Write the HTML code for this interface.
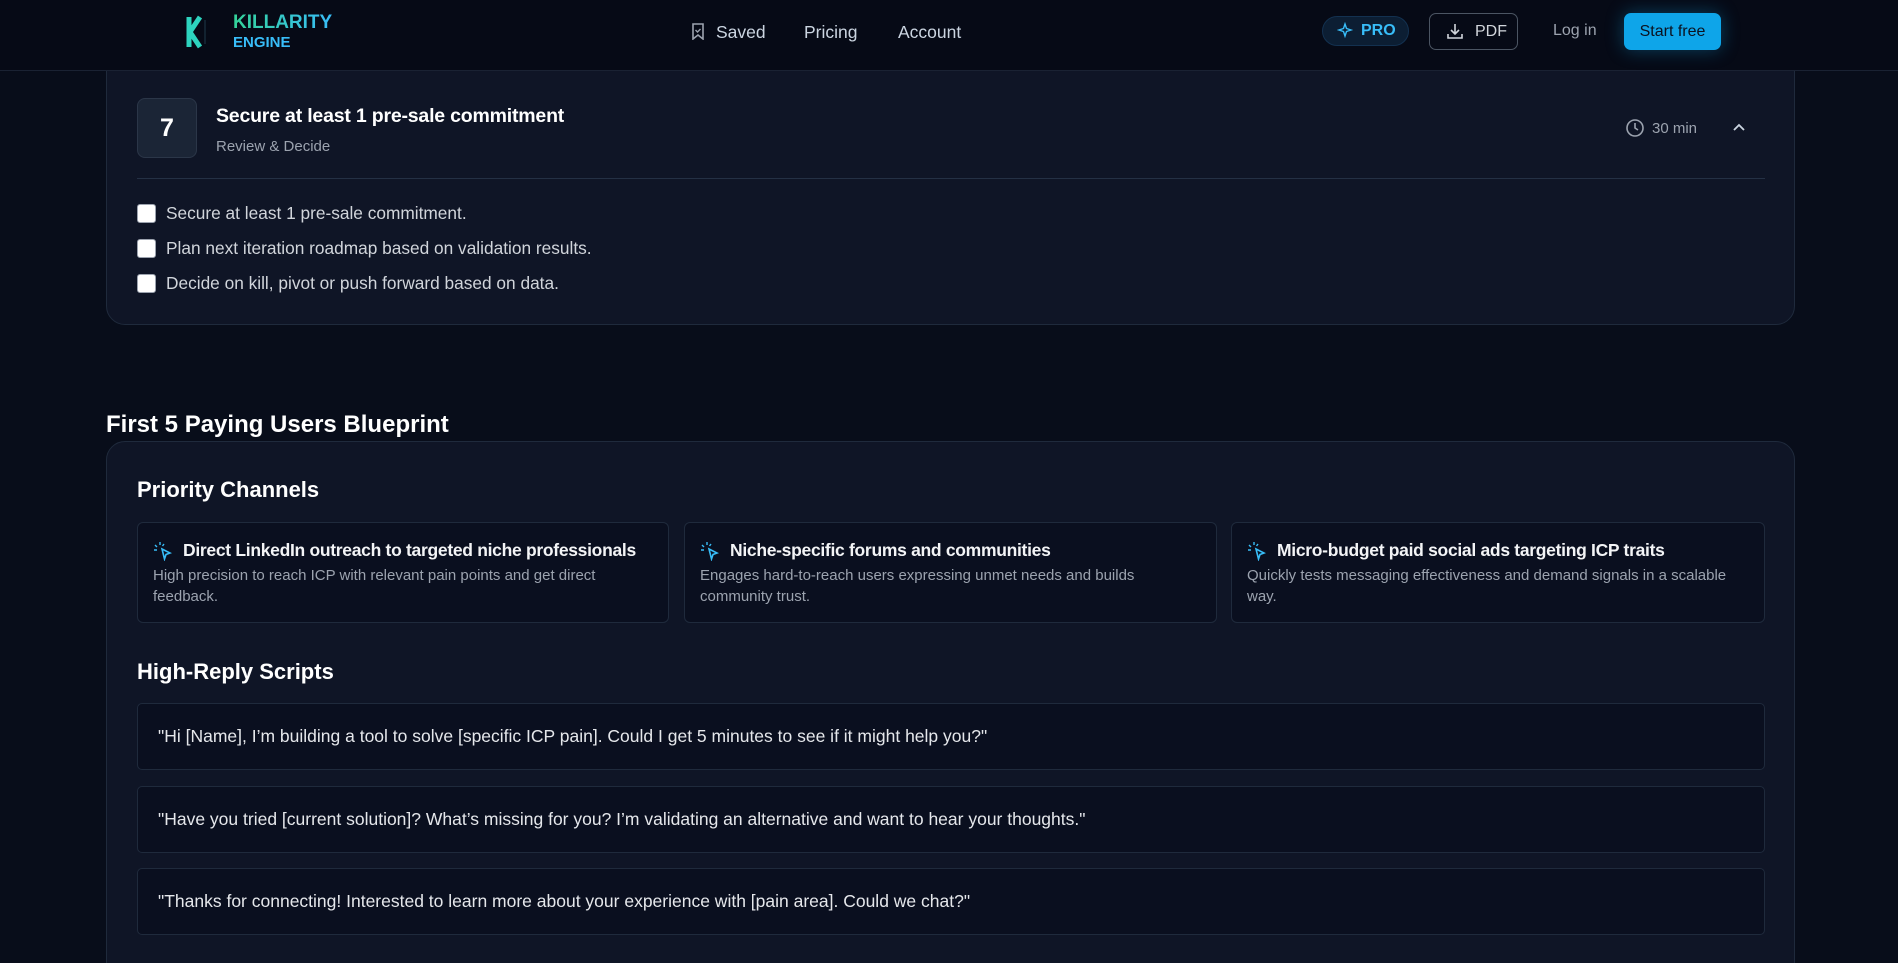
<!DOCTYPE html>
<html style="width:1898px;height:963px;overflow:hidden"><head><meta charset="utf-8"><style>
*{box-sizing:border-box;margin:0;padding:0}
body{width:1898px;height:963px;overflow:hidden;background:#080d1a;font-family:"Liberation Sans",sans-serif;color:#e5e7eb;position:relative}
.abs{position:absolute}
nav{position:absolute;left:0;top:0;width:1898px;height:71px;background:#060a16;border-bottom:1px solid #1a2233;z-index:5}
.card{position:absolute;left:106px;width:1689px;background:#0f1526;border:1px solid #1f2a3c;border-radius:19px}
.cb{position:absolute;left:137px;width:19px;height:19px;background:#fff;border-radius:3px;border:1px solid #9ca3af}
.ck{position:absolute;left:166px;font-size:17.3px;color:#d1d5db}
.ch{position:absolute;top:522px;height:101px;background:#0a0f1f;border:1px solid #1f2a3c;border-radius:6px;padding:0 15px}
.ch h4{font-size:17.5px;letter-spacing:-0.3px;font-weight:bold;color:#f3f4f6;margin-top:17px;display:flex;align-items:center;gap:10px;white-space:nowrap}
.ch p{font-size:15px;color:#9ca3af;line-height:20.5px;margin-top:5px}
.sc{position:absolute;left:137px;width:1628px;height:67px;background:#0a0f1f;border:1px solid #1f2a3c;border-radius:5px;padding-left:20px;font-size:17.5px;color:#e5e7eb;line-height:65px}
h3{position:absolute;left:137px;font-size:22px;font-weight:bold;color:#fff}
</style></head><body>
<nav>
<svg class="abs" style="left:184px;top:14px" width="26" height="36" viewBox="0 0 26 36"><path d="M5 3v30M6 18L16 3M6 18l10 15" stroke="#2dd4bf" stroke-width="5" fill="none"/><path d="M21 6v24" stroke="#1e3a4a" stroke-width="1"/></svg>
<div class="abs" style="left:233px;top:12px;font-size:19px;font-weight:bold;background:linear-gradient(90deg,#34d399,#38bdf8);-webkit-background-clip:text;color:transparent">KILLARITY</div>
<div class="abs" style="left:233px;top:34px;font-size:15px;font-weight:bold;color:#38bdf8">ENGINE</div>
<svg class="abs" style="left:691px;top:23px" width="14" height="17" viewBox="0 0 14 17"><path d="M2 1h10v15l-5-4-5 4z" stroke="#9ca3af" stroke-width="1.6" fill="none"/><path d="M4.5 7l2 2 3-3" stroke="#9ca3af" stroke-width="1.4" fill="none"/></svg>
<div class="abs" style="left:716px;top:22px;font-size:17.5px;color:#cbd5e1">Saved</div>
<div class="abs" style="left:804px;top:22px;font-size:17.5px;color:#cbd5e1">Pricing</div>
<div class="abs" style="left:898px;top:22px;font-size:17.5px;color:#cbd5e1">Account</div>
<div class="abs" style="left:1322px;top:16px;width:87px;height:30px;border-radius:15px;background:#0c1e33;border:1px solid #133150;color:#38bdf8;font-weight:bold;font-size:16px;line-height:28px;padding-left:38px">PRO</div>
<svg class="abs" style="left:1337px;top:22px" width="17" height="17" viewBox="0 0 17 17"><path d="M8 2l1.5 4.5L14 8l-4.5 1.5L8 14l-1.5-4.5L2 8l4.5-1.5z" stroke="#38bdf8" stroke-width="1.4" fill="none"/></svg>
<div class="abs" style="left:1429px;top:13px;width:89px;height:37px;border-radius:7px;border:1px solid #4b5563;color:#d1d5db;font-size:16px;line-height:35px;padding-left:45px">PDF</div>
<svg class="abs" style="left:1446px;top:22px" width="18" height="18" viewBox="0 0 18 18"><path d="M9 2v10M5 8l4 4 4-4M2 12v4h14v-4" stroke="#d1d5db" stroke-width="1.6" fill="none"/></svg>
<div class="abs" style="left:1553px;top:22px;font-size:16px;color:#9ca3af">Log in</div>
<div class="abs" style="left:1624px;top:13px;width:97px;height:37px;border-radius:7px;background:#0ea5e9;color:#0b1220;font-size:16px;line-height:37px;text-align:center;box-shadow:0 0 18px rgba(14,165,233,.35)">Start free</div>
</nav>

<div class="card" style="top:50px;height:275px"></div>
<div class="abs" style="left:137px;top:98px;width:60px;height:60px;border-radius:8px;background:#1b2536;border:1px solid #2b3648;color:#fff;font-size:25px;font-weight:bold;text-align:center;line-height:58px">7</div>
<div class="abs" style="left:216px;top:105px;font-size:19.5px;font-weight:bold;color:#fff;letter-spacing:-0.2px">Secure at least 1 pre-sale commitment</div>
<div class="abs" style="left:216px;top:138px;font-size:15px;color:#9ca3af">Review &amp; Decide</div>
<svg class="abs" style="left:1625px;top:118px" width="20" height="20" viewBox="0 0 20 20"><circle cx="10" cy="10" r="8" stroke="#9ca3af" stroke-width="1.6" fill="none"/><path d="M10 5v5l3 2" stroke="#9ca3af" stroke-width="1.6" fill="none"/></svg>
<div class="abs" style="left:1652px;top:120px;font-size:15px;color:#9ca3af">30 min</div>
<svg class="abs" style="left:1732px;top:122px" width="14" height="10" viewBox="0 0 14 10"><path d="M2 8l5-5 5 5" stroke="#cbd5e1" stroke-width="1.8" fill="none"/></svg>
<div class="abs" style="left:137px;top:178px;width:1628px;height:1px;background:#243044"></div>
<div class="cb" style="top:204px"></div><div class="ck" style="top:203px">Secure at least 1 pre-sale commitment.</div>
<div class="cb" style="top:239px"></div><div class="ck" style="top:238px">Plan next iteration roadmap based on validation results.</div>
<div class="cb" style="top:274px"></div><div class="ck" style="top:273px">Decide on kill, pivot or push forward based on data.</div>

<div class="abs" style="left:106px;top:411px;font-size:24px;font-weight:bold;color:#fff">First 5 Paying Users Blueprint</div>
<div class="card" style="top:441px;height:540px"></div>
<h3 style="top:477px">Priority Channels</h3>
<div class="ch" style="left:137px;width:532px"><h4><svg width="20" height="20" viewBox="0 0 20 20"><path d="M9 8l8 4-4 1.5L11.5 18z" stroke="#38bdf8" stroke-width="1.6" fill="none"/><path d="M7 1v3M2 4l2 2M1 9h3M11 3l-1.5 2" stroke="#38bdf8" stroke-width="1.4"/></svg>Direct LinkedIn outreach to targeted niche professionals</h4><p>High precision to reach ICP with relevant pain points and get direct<br>feedback.</p></div>
<div class="ch" style="left:684px;width:533px"><h4><svg width="20" height="20" viewBox="0 0 20 20"><path d="M9 8l8 4-4 1.5L11.5 18z" stroke="#38bdf8" stroke-width="1.6" fill="none"/><path d="M7 1v3M2 4l2 2M1 9h3M11 3l-1.5 2" stroke="#38bdf8" stroke-width="1.4"/></svg>Niche-specific forums and communities</h4><p>Engages hard-to-reach users expressing unmet needs and builds<br>community trust.</p></div>
<div class="ch" style="left:1231px;width:534px"><h4><svg width="20" height="20" viewBox="0 0 20 20"><path d="M9 8l8 4-4 1.5L11.5 18z" stroke="#38bdf8" stroke-width="1.6" fill="none"/><path d="M7 1v3M2 4l2 2M1 9h3M11 3l-1.5 2" stroke="#38bdf8" stroke-width="1.4"/></svg>Micro-budget paid social ads targeting ICP traits</h4><p>Quickly tests messaging effectiveness and demand signals in a scalable<br>way.</p></div>
<h3 style="top:659px">High-Reply Scripts</h3>
<div class="sc" style="top:703px">"Hi [Name], I’m building a tool to solve [specific ICP pain]. Could I get 5 minutes to see if it might help you?"</div>
<div class="sc" style="top:786px">"Have you tried [current solution]? What’s missing for you? I’m validating an alternative and want to hear your thoughts."</div>
<div class="sc" style="top:868px">"Thanks for connecting! Interested to learn more about your experience with [pain area]. Could we chat?"</div>
</body></html>
